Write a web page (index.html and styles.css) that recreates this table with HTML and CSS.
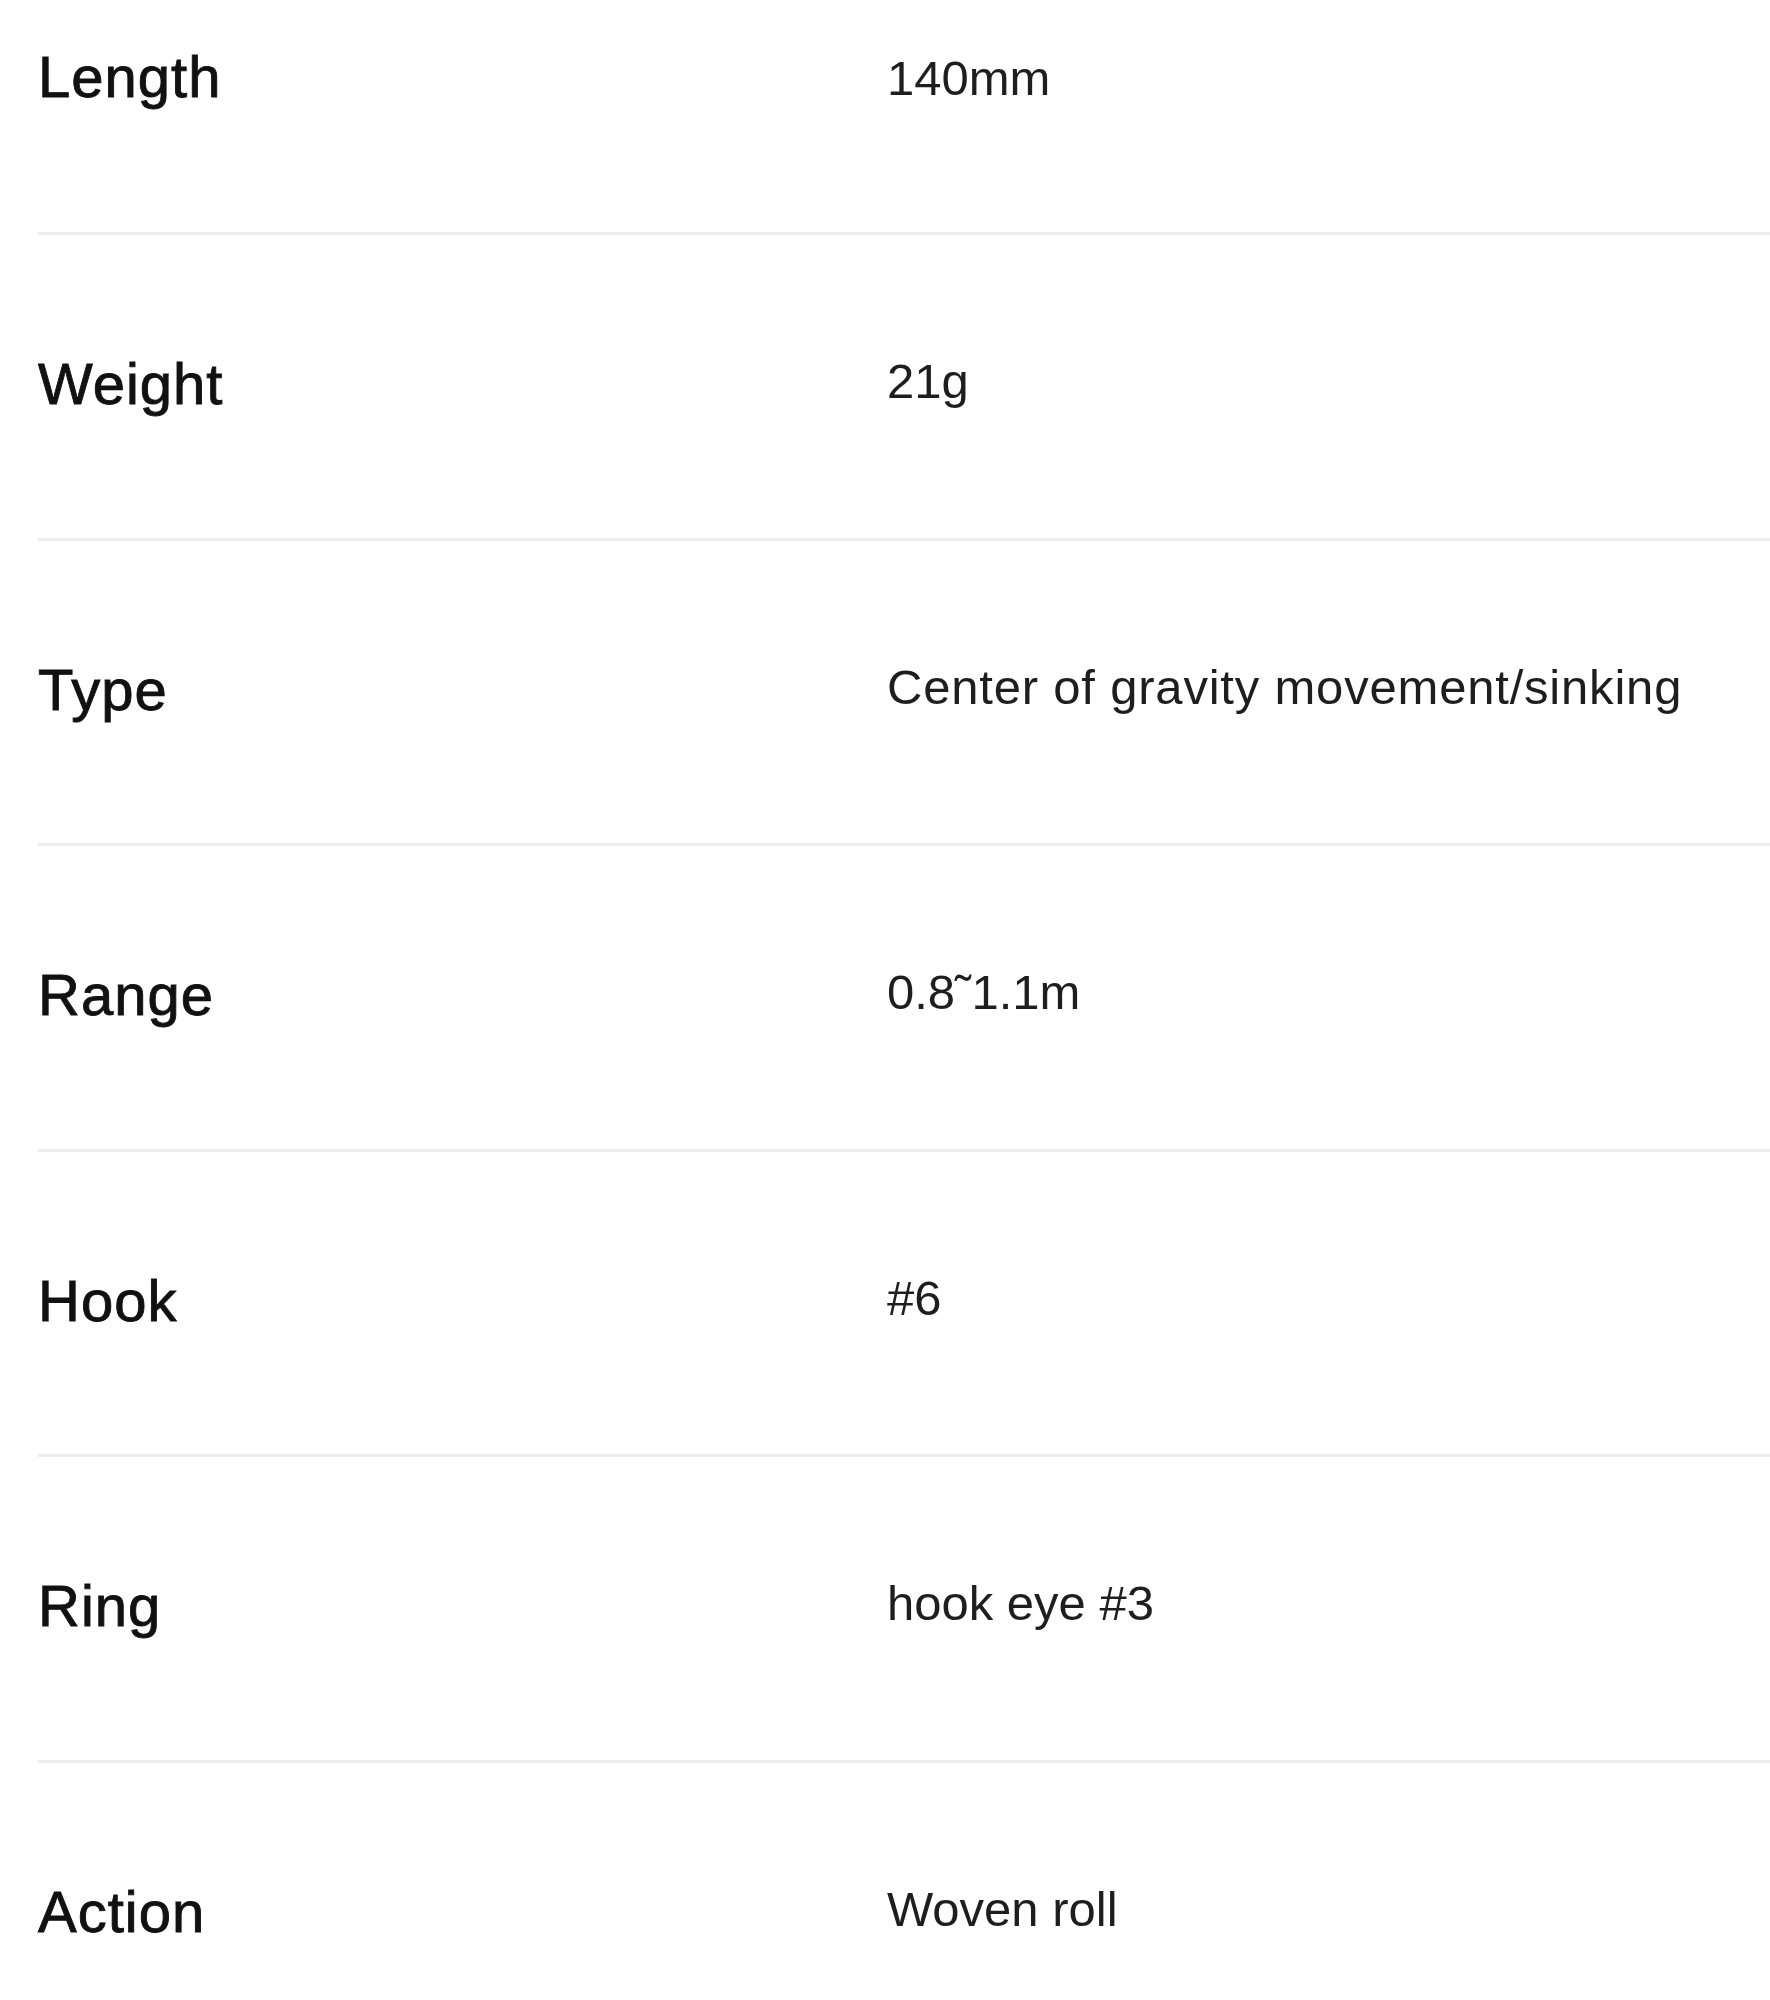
FILE: index.html
```html
<!DOCTYPE html>
<html lang="en">
<head>
<meta charset="utf-8">
<title>Specifications</title>
<link rel="stylesheet" href="styles.css">
</head>
<body>
<div class="spec">
  <div class="spec-row spec-row--first">
    <div class="spec-label">Length</div>
    <div class="spec-value spec-value--first">140mm</div>
  </div>
  <div class="spec-row">
    <div class="spec-label">Weight</div>
    <div class="spec-value">21g</div>
  </div>
  <div class="spec-row">
    <div class="spec-label">Type</div>
    <div class="spec-value spec-value--wide">Center of gravity movement/sinking</div>
  </div>
  <div class="spec-row">
    <div class="spec-label">Range</div>
    <div class="spec-value">0.8˜1.1m</div>
  </div>
  <div class="spec-row">
    <div class="spec-label">Hook</div>
    <div class="spec-value">#6</div>
  </div>
  <div class="spec-row">
    <div class="spec-label">Ring</div>
    <div class="spec-value">hook eye #3</div>
  </div>
  <div class="spec-row spec-row--last">
    <div class="spec-label">Action</div>
    <div class="spec-value">Woven roll</div>
  </div>
</div>
</body>
</html>
```

FILE: styles.css
```css
html, body {
  margin: 0;
  padding: 0;
  background: #ffffff;
}

body {
  font-family: "Liberation Sans", Arial, sans-serif;
  color: #151515;
}

.spec {
  margin-left: 38px;
  display: flex;
  flex-direction: column;
}

.spec-row {
  display: grid;
  grid-template-columns: 849px 1fr;
  align-items: start;
  box-sizing: border-box;
  height: 305.5px;
  padding-top: 120px;
  border-bottom: 3px solid #ededed;
}

.spec-row--first {
  height: 235px;
  padding-top: 48px;
}

.spec-row--last {
  border-bottom: none;
}

.spec-label {
  font-size: 58px;
  line-height: 58px;
  letter-spacing: 1px;
  color: #111111;
  -webkit-text-stroke: 0.9px #111111;
  white-space: nowrap;
}

.spec-value {
  font-size: 49px;
  line-height: 49px;
  letter-spacing: 0;
  color: #1e1e1e;
  padding-top: 2px;
  white-space: nowrap;
}

.spec-value--wide {
  letter-spacing: 0.8px;
}

.spec-value--first {
  padding-top: 6px;
}
```
